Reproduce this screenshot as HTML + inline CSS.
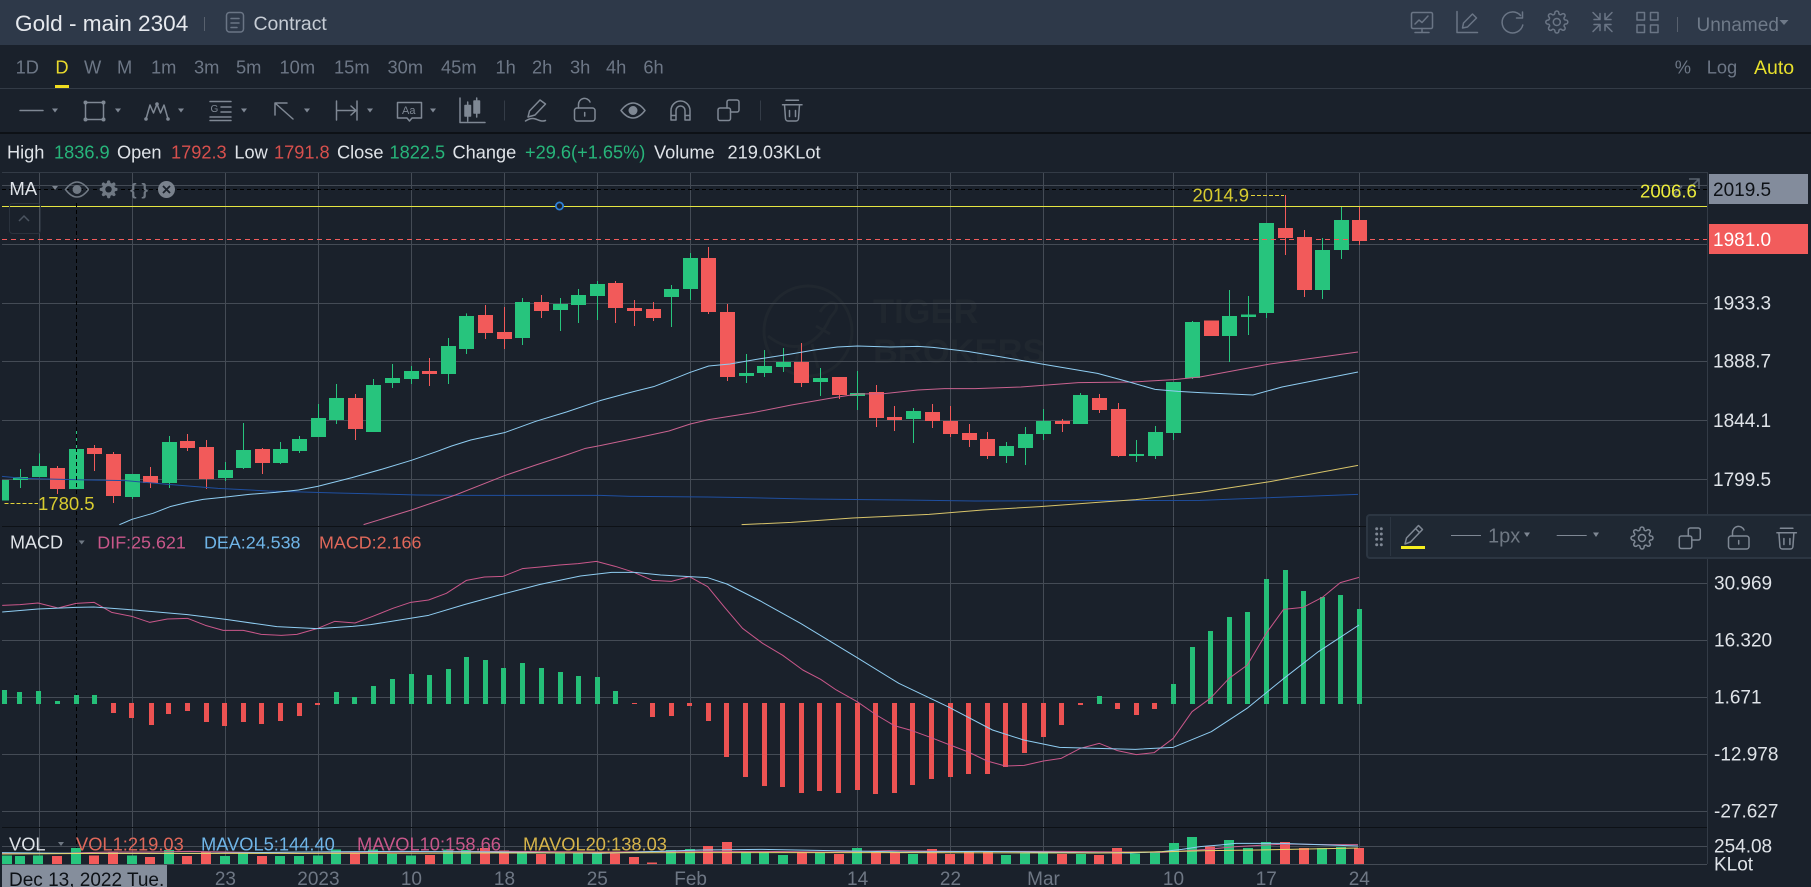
<!DOCTYPE html>
<html>
<head>
<meta charset="utf-8">
<title>Gold - main 2304</title>
<style>
html,body{margin:0;padding:0;background:#1a212b;width:1811px;height:887px;overflow:hidden}
svg{display:block;font-family:"Liberation Sans",sans-serif}
.i{fill:none;stroke:#7f8894;stroke-width:1.5;stroke-linecap:round;stroke-linejoin:round}
.h{fill:none;stroke:#6a7585;stroke-width:1.5;stroke-linecap:round;stroke-linejoin:round}
.l{fill:none;vector-effect:non-scaling-stroke;stroke-linejoin:round}
.tf{font-size:18.3px;fill:#6d7786}
.info{font-size:18.2px;fill:#dfe3e8}
.g{fill:#27b57a}.r{fill:#d8504d}
.ax{font-size:19px;fill:#dfe3e8}
.dt{font-size:19px;fill:#6e7784;text-anchor:middle}
.lb{font-size:18.2px}
</style>
</head>
<body>
<svg width="1811" height="887" viewBox="0 0 1811 887" xmlns="http://www.w3.org/2000/svg">
<defs>
<path id="gear" d="M19.4 15a1.65 1.65 0 0 0 .33 1.82l.06.06a2 2 0 0 1 0 2.83 2 2 0 0 1-2.83 0l-.06-.06a1.65 1.65 0 0 0-1.82-.33 1.65 1.65 0 0 0-1 1.51V21a2 2 0 0 1-2 2 2 2 0 0 1-2-2v-.09A1.65 1.65 0 0 0 9 19.4a1.65 1.65 0 0 0-1.82.33l-.06.06a2 2 0 0 1-2.83 0 2 2 0 0 1 0-2.83l.06-.06a1.65 1.65 0 0 0 .33-1.82 1.65 1.65 0 0 0-1.51-1H3a2 2 0 0 1-2-2 2 2 0 0 1 2-2h.09A1.65 1.65 0 0 0 4.6 9a1.65 1.65 0 0 0-.33-1.82l-.06-.06a2 2 0 0 1 0-2.83 2 2 0 0 1 2.83 0l.06.06a1.65 1.65 0 0 0 1.82.33H9a1.65 1.65 0 0 0 1-1.51V3a2 2 0 0 1 2-2 2 2 0 0 1 2 2v.09a1.65 1.65 0 0 0 1 1.51 1.65 1.65 0 0 0 1.82-.33l.06-.06a2 2 0 0 1 2.83 0 2 2 0 0 1 0 2.83l-.06.06a1.65 1.65 0 0 0-.33 1.82V9a1.65 1.65 0 0 0 1.51 1H21a2 2 0 0 1 2 2 2 2 0 0 1-2 2h-.09a1.65 1.65 0 0 0-1.51 1z"/>
<g id="lock"><rect x="574.5" y="108" width="20.5" height="13" rx="2.5"/><path d="M578.5 108v-3.500a6 6 0 0 1 11.500-2.500M584.700 112.500v3.500"/></g>
<g id="copy"><rect x="718" y="108" width="12.500" height="12.500" rx="2"/><path d="M727 108v-6a2 2 0 0 1 2-2h8a2 2 0 0 1 2 2v8a2 2 0 0 1-2 2h-6.500"/></g>
<g id="trash"><path d="M782.500 104.700h19.500M786 100.300h12.500M784.500 104.700l1 13.800a2.500 2.500 0 0 0 2.500 2.500h8a2.500 2.500 0 0 0 2.500-2.500l1-13.800M789.500 110.500v6M795.500 110.500v6"/></g>
</defs>

<!-- header -->
<rect x="0" y="0" width="1811" height="45" fill="#2e3949"/>
<text x="15" y="31" font-size="22.600" fill="#e6e9ee">Gold - main 2304</text>
<path d="M204.500 17V31" stroke="#58616e" stroke-width="1"/>
<g class="h"><rect x="226.500" y="12.500" width="17" height="19.500" rx="3"/><path d="M231 18.500h8M231 23h8M231 27.500h6"/></g>
<text x="253.500" y="30" font-size="19.400" fill="#c6ccd4">Contract</text>

<g class="h">
<rect x="1411.500" y="12.500" width="21" height="16" rx="1.500"/><path d="M1422 28.500v4M1415 32.500h14M1415 24l4-4 3 2.500 6-6.500"/>
<path d="M1457 11.500V32.500H1477.500M1462.500 28l1-5 9-9 4 4-9 9z"/>
<path d="M1520.500 15.500A10.500 10.500 0 1 0 1522.800 25M1522.500 12v6h-6"/>
<use href="#gear" transform="translate(1544.800 10)"/><circle cx="1556.800" cy="22" r="3.500"/>
<path d="M1593 12.500l7 7M1600 13.500v6h-6M1612 12.500l-7 7M1605 13.500v6h6M1593 31.500l7-7M1600 30.500v-6h-6M1612 31.500l-7-7M1605 30.500v-6h6"/>
<rect x="1637" y="12.500" width="7.500" height="7.500"/><rect x="1650.500" y="12.500" width="7.500" height="7.500"/><rect x="1637" y="25" width="7.500" height="7.500"/><rect x="1650.500" y="25" width="7.500" height="7.500"/>
</g>
<path d="M1677.500 17V32" stroke="#58616e" stroke-width="1"/>
<text x="1696.500" y="31" font-size="19" fill="#6f7a89">Unnamed</text>
<path d="M1779.500 20h9l-4.500 5z" fill="#6f7a89"/>

<!-- timeframe row -->
<g class="tf">
<text x="15.600" y="73.500">1D</text>
<text x="55.400" y="73.500" fill="#e8d92c" style="fill:#e8d92c">D</text>
<text x="84" y="73.500">W</text><text x="117" y="73.500">M</text>
<text x="151" y="73.500">1m</text><text x="194" y="73.500">3m</text><text x="236" y="73.500">5m</text>
<text x="279.500" y="73.500">10m</text><text x="334" y="73.500">15m</text><text x="387.500" y="73.500">30m</text><text x="441" y="73.500">45m</text>
<text x="495.500" y="73.500">1h</text><text x="532" y="73.500">2h</text><text x="570" y="73.500">3h</text><text x="606" y="73.500">4h</text><text x="643.400" y="73.500">6h</text>
<text x="1674.700" y="73.500">%</text><text x="1706.700" y="73.500">Log</text>
</g>
<text x="1754" y="74" font-size="19.500" fill="#e8e02c">Auto</text>
<rect x="55" y="85" width="14" height="3" fill="#f0dd20"/>
<rect x="0" y="88" width="1811" height="1" fill="#333b46"/>

<!-- toolbar -->
<g class="i">
<path d="M20 110.500H43"/>
<rect x="85.500" y="102.500" width="18" height="17"/>
<path d="M146 119l4-14 3.500 8 3.500-9 3.500 9 3.500-8 4 14"/>
<path d="M210 101.500h21M221 107h10M221 112h10M210 117h21M210 120.500h21"/>
<path d="M293 119L275 103M275 103h12M275 103v12"/>
<path d="M336.500 101v19M357 101v19M337 110.500h19M351 106l5 4.500-5 4.500"/>
<path d="M397.500 102.500h24v15.500h-9.500l-2.500 3-2.500-3h-9.500z"/>
<path d="M460 98v24.500h25M467.700 102v19M476.700 98v19"/>
<rect x="465" y="105.500" width="5.500" height="10.500" fill="#7f8894"/><rect x="474" y="101" width="5.500" height="12" fill="#7f8894"/>
<path d="M528 117l1.500-6L540 100l5.500 4L535 115l-7 2zM525.500 121c3-2 7-3 10-2s6 3 10 1.500"/>
<use href="#lock"/>
<path d="M621 110.500C626 104 630 103 633 103s7 1 12 7.500C640 117 636 118 633 118s-7-1-12-7.500z"/>
<path d="M671 120V110.500a9.500 9.500 0 0 1 19 0V120h-5V110.500a4.500 4.500 0 0 0-9 0V120zM671 115.500h5M685 115.500h5"/>
<use href="#copy"/>
<use href="#trash"/>
</g>
<circle cx="633" cy="110.500" r="4.500" fill="#7f8894"/>
<g fill="#7f8894">
<circle cx="85.500" cy="102.500" r="2"/><circle cx="103.500" cy="102.500" r="2"/><circle cx="85.500" cy="119.500" r="2"/><circle cx="103.500" cy="119.500" r="2"/>
<circle cx="146" cy="119" r="1.800"/><circle cx="157" cy="104" r="1.800"/><circle cx="168" cy="119" r="1.800"/>
<path d="M52 108.500h6l-3 4zM115 108.500h6l-3 4zM178 108.500h6l-3 4zM241 108.500h6l-3 4zM304 108.500h6l-3 4zM367 108.500h6l-3 4zM430 108.500h6l-3 4z"/>
</g>
<text x="210.500" y="112" font-size="10" fill="#7f8894">G</text>
<text x="402" y="114" font-size="11" fill="#7f8894">Aa</text>
<path d="M504.500 100.500v20M760.500 100.500v20" stroke="#343c47" stroke-width="1"/>
<rect x="0" y="132" width="1811" height="2" fill="#0d1116"/>

<!-- info -->
<g class="info">
<text x="7" y="158.500">High</text><text x="54" y="158.500" class="g">1836.9</text>
<text x="117" y="158.500">Open</text><text x="171" y="158.500" class="r">1792.3</text>
<text x="234.400" y="158.500">Low</text><text x="274" y="158.500" class="r">1791.8</text>
<text x="337" y="158.500">Close</text><text x="389.500" y="158.500" class="g">1822.5</text>
<text x="452.500" y="158.500">Change</text><text x="525" y="158.500" class="g">+29.6(+1.65%)</text>
<text x="654" y="158.500">Volume</text><text x="727.500" y="158.500">219.03KLot</text>
</g>

<!-- watermark -->
<g fill="none" stroke="#20272f" stroke-width="3">
<ellipse cx="808" cy="331" rx="44" ry="45"/>
<path d="M768 336c10 8 20 12 32 10 14-3 24-14 30-28M830 318c4-6 8-8 6-14-6-4-12 2-16 8M800 346l-6 22M812 344l6 24M816 326l14 8"/>
</g>
<text x="873" y="323" font-size="34.500" font-weight="bold" fill="#20272f">TIGER</text>
<text x="873" y="363" font-size="34.500" font-weight="bold" fill="#20272f">BROKERS</text>

<!-- grid -->
<path d="M39.500 172V864M132.500 172V864M225.500 172V864M318.500 172V864M411.500 172V864M504.500 172V864M597.500 172V864M690.500 172V864M857.500 172V864M950.500 172V864M1043.500 172V864M1173.500 172V864M1266.500 172V864M1359.500 172V864" stroke="#444b55" stroke-width="1" shape-rendering="crispEdges"/>
<path d="M2 185.500H1707M2 244.500H1707M2 303.500H1707M2 361.500H1707M2 420.500H1707M2 479.500H1707M2 583.500H1707M2 640.500H1707M2 697.500H1707M2 754.500H1707M2 811.500H1707M2 846.500H1707M2 864.500H1707" stroke="#444b55" stroke-width="1" shape-rendering="crispEdges"/>
<path d="M2 172.500H1707M1707.500 172V864" stroke="#333b46" stroke-width="1" shape-rendering="crispEdges"/>
<path d="M2 526.500H1707M2 827.500H1707" stroke="#0d1116" stroke-width="1" shape-rendering="crispEdges"/>

<!-- candles -->
<g transform="translate(0 230) scale(1 .33333)" fill="none" shape-rendering="crispEdges">
<path stroke="#27c47d" stroke-width="1" d="M20.500 717V774M39.500 670V741M76.500 600V777M132.500 732V807M169.500 618V774M225.500 696V753M243.500 579V717M280.500 636V702M299.500 618V669M318.500 522V621M336.500 462V582M373.500 447V606M392.500 402V474M411.500 408V462M448.500 324V462M466.500 250V372M522.500 204V345M560.500 204V303M578.500 177V279M597.500 153V270M671.500 165V291M690.500 69V210M746.500 372V459M764.500 360V441M783.500 354V426M820.500 414V498M857.500 423V540M913.500 534V639M1006.500 636V699M1025.500 591V705M1043.500 537V630M1080.500 489V582M1136.500 630V696M1155.500 588V687M1173.500 456V630M1192.500 273V447"/>
<path stroke="#27c47d" stroke-width="15" d="M20.500 741V750M39.500 708V741M76.500 657V777M132.500 732V801M169.500 636V759M225.500 720V744M243.500 660V714M280.500 657V699M299.500 627V663M318.500 564V621M336.500 504V570M373.500 465V606M392.500 444V459M411.500 423V447M448.500 348V432M466.500 258V357M522.500 216V324M560.500 222V240M578.500 195V225M597.500 162V198M671.500 177V201M690.500 84V177M746.500 429V438M764.500 408V429M783.500 396V411M820.500 444V456M857.500 489V498M913.500 543V567M1006.500 648V678M1025.500 612V654M1043.500 573V612M1080.500 495V582M1136.500 672V678M1155.500 606V678M1173.500 456V609M1192.500 276V444"/>
<path stroke="#27c47d" stroke-width="7" d="M5.500 750V812"/>
<path stroke="#f25a5a" stroke-width="1" d="M57.500 708V792M94.500 645V723M113.500 666V819M150.500 711V774M187.500 612V663M206.500 630V777M262.500 654V732M355.500 492V630M429.500 384V468M485.500 225V327M504.500 231V357M541.500 195V264M615.500 153V279M634.500 210V288M653.500 216V273M708.500 51V252M727.500 222V453M801.500 339V471M839.500 441V507M876.500 465V591M894.500 528V603M932.500 522V594M950.500 528V621M969.500 582V651M987.500 606V687M1062.500 567V606M1099.500 492V549M1118.500 519V681"/>
<path stroke="#f25a5a" stroke-width="15" d="M57.500 714V777M94.500 654V672M113.500 672V798M150.500 738V759M187.500 633V654M206.500 651V747M262.500 657V699M355.500 504V597M429.500 423V432M485.500 255V309M504.500 306V327M541.500 216V243M615.500 159V234M634.500 234V243M653.500 237V264M708.500 84V246M727.500 246V441M801.500 396V459M839.500 441V495M876.500 486V564M894.500 561V570M932.500 546V573M950.500 573V612M969.500 609V630M987.500 627V678M1062.500 573V582M1099.500 504V540M1118.500 537V678"/>
</g>
<g transform="translate(0 170) scale(1 .33333)" fill="none" shape-rendering="crispEdges">
<path stroke="#27c47d" stroke-width="1" d="M1229.500 360V576M1248.500 378V495M1266.500 159V444M1322.500 204V387M1341.500 110V267"/>
<path stroke="#27c47d" stroke-width="15" d="M1229.500 438V498M1248.500 434V441M1266.500 159V429M1322.500 240V360M1341.500 150V240"/>
<path stroke="#f25a5a" stroke-width="1" d="M1285.500 75V255M1304.500 180V381M1359.500 110V225"/>
<path stroke="#f25a5a" stroke-width="15" d="M1211.500 452V498M1285.500 174V204M1304.500 201V360M1359.500 150V213"/>
</g>

<!-- MA lines -->
<g transform="translate(0 230) scale(1 .33333)">
<polyline class="l" stroke="#1f4fa0" stroke-width="1" points="2,739 23,745 88,750 126,752 168,763 218,775 268,783 337,789 379,792 417,795 459,796 600,796 630.600,799 707,801 745.400,803 806.700,807 902.300,810 975,813 1063,812 1200,811 1358,793"/>
<polyline class="l" stroke="#d8c46a" stroke-width="1" points="741.600,884 791.300,877 852.600,864 894.700,858 929,853 982.700,840 1040,830 1097.500,817 1135.800,809 1200,787 1270,755 1358,706"/>
<polyline class="l" stroke="#c9628f" stroke-width="1" points="363.600,884 411.400,840 455.400,795 504.400,737 535.800,705 566.400,675 585.500,655 600,647 638.300,623 668.900,603 690.300,582 708.700,569 753,548 791.400,525 829.600,505 857.600,492 884.400,491 917.600,480 944.400,476 975,476 1021,471 1078.400,458 1132,456 1174,449 1200,441 1270,402 1358,366"/>
<polyline class="l" stroke="#8fcdf2" stroke-width="1" points="119.400,884 132,868 153,850 170,830 187.500,817 203,808 226,801 249,793 275.500,787 298.500,780 317.600,769 352,743 382.700,717 411.400,691 436.300,665 451.600,648 470.700,630 504.400,608 535.800,574 566.400,546 600,512 626.800,490 653.600,470 672.700,448 690.300,427 708.700,408 730,402 760.700,386 791,372 814.300,360 837.300,351 857.600,348 890.900,351 917.600,349 933,352 967.400,364 998,379 1043.900,403 1097.500,430 1128,455 1155,478 1178,484 1200,488 1253,495 1282,471 1358,426"/>
</g>

<!-- overlay lines -->
<path d="M2 206.500H1707" stroke="#e6e642" stroke-width="1.200" shape-rendering="crispEdges"/>
<circle cx="559.500" cy="206" r="3.600" fill="#1a212b" stroke="#2f7fd6" stroke-width="1.800"/>
<path d="M2 189.500H1707" stroke="#000" stroke-width="1" stroke-dasharray="4 3" shape-rendering="crispEdges"/>
<path d="M2 239.500H1707" stroke="#f25c5c" stroke-width="1" stroke-dasharray="5 4" shape-rendering="crispEdges"/>
<path d="M76.500 203V864" stroke="#000" stroke-width="1" stroke-dasharray="4 3" shape-rendering="crispEdges"/>
<path d="M1251 195.500H1284" stroke="#e3d23a" stroke-width="1" stroke-dasharray="4 2" shape-rendering="crispEdges"/>
<path d="M4.500 503.500H38" stroke="#e3d23a" stroke-width="1" stroke-dasharray="4 2" shape-rendering="crispEdges"/>
<text x="1192.500" y="201.500" font-size="18.500" fill="#d8cc30">2014.9</text>
<text x="38" y="510" font-size="18.500" fill="#d8cc30">1780.5</text>
<path d="M1689 179h10v10M1699 179l-9 9M1682 186l-9 9M1673 187v8h8" fill="none" stroke="#5b6470" stroke-width="1.600"/>
<text x="1640" y="197.500" font-size="18.600" fill="#ecec3c">2006.6</text>

<!-- MA controls -->
<text x="9.400" y="195" font-size="18.500" fill="#dfe3e8">MA</text>
<path d="M52 186h6l-3 4z" fill="#7a828d"/>
<path d="M65.500 189.500C70 183.500 74 182 77 182s7 1.500 11.500 7.500C84 195.500 80 197 77 197s-7-1.500-11.500-7.500z" fill="none" stroke="#6f7883" stroke-width="1.500"/>
<circle cx="77" cy="189.500" r="4.500" fill="#6f7883"/>
<use href="#gear" transform="translate(98.800 179.500) scale(.82)" fill="#6f7883"/><circle cx="108.500" cy="189.300" r="3.200" fill="#1a212b"/>
<text x="130" y="195" font-size="17" fill="#6f7883" font-weight="bold">{ }</text>
<circle cx="166.500" cy="189.500" r="8.500" fill="#7a828d"/>
<path d="M163 186l7 7M170 186l-7 7" stroke="#1a212b" stroke-width="1.800"/>
<rect x="9.500" y="203.500" width="31" height="30" rx="3" fill="none" stroke="#2a323d"/>
<path d="M19 221l5-5 5 5" fill="none" stroke="#4b5460" stroke-width="1.500"/>

<!-- MACD -->
<text x="10" y="548.500" font-size="18" fill="#dfe3e8">MACD</text>
<path d="M78.700 540.500h6l-3 4z" fill="#6f7883"/>
<text x="97.300" y="548.500" font-size="17.900" fill="#c9578a">DIF:25.621</text>
<text x="204" y="548.500" font-size="17.900" fill="#6fb5e8">DEA:24.538</text>
<text x="319" y="548.500" font-size="17.900" fill="#e0685a">MACD:2.166</text>
<g transform="translate(0 520) scale(1 .33333)" fill="none" shape-rendering="crispEdges">
<path stroke="#25bf78" stroke-width="5" d="M4.500 510V552M19.500 516V552M38.500 513V552M57.500 543V552M76.500 525V552M94.500 525V552M336.500 516V552M354.500 531V552M373.500 498V552M392.500 477V552M411.500 462V552M429.500 465V552M448.500 447V552M466.500 411V552M485.500 420V552M503.500 444V552M522.500 429V552M541.500 444V552M560.500 456V552M578.500 468V552M597.500 471V552M615.500 513V552M1099.500 528V552M1173.500 492V552M1192.500 381V552M1210.500 333V552M1229.500 291V552M1247.500 276V552M1266.500 177V552M1285.500 150V552M1303.500 213V552M1322.500 231V552M1340.500 225V552M1359.500 267V552"/>
<path stroke="#ec5252" stroke-width="5" d="M113.500 549V579M131.500 549V594M151.500 549V615M168.500 549V582M187.500 549V573M206.500 549V606M224.500 549V618M243.500 549V606M261.500 549V612M280.500 549V603M299.500 549V588M317.500 549V555M634.500 549V552M652.500 549V591M671.500 549V588M689.500 549V558M708.500 549V603M726.500 549V711M745.500 549V771M764.500 549V798M782.500 549V801M801.500 549V819M819.500 549V813M838.500 549V819M857.500 549V810M875.500 549V822M894.500 549V819M912.500 549V795M931.500 549V777M950.500 549V771M968.500 549V762M987.500 549V762M1005.500 549V741M1024.500 549V699M1043.500 549V651M1061.500 549V615M1080.500 549V555M1117.500 549V567M1136.500 549V585M1154.500 549V567"/>
</g>
<g transform="translate(0 520) scale(1 .33333)">
<polyline class="l" stroke="#c9578a" stroke-width="1" points="2.200,256 20,254 38,249 58,264 76,250 94,247 111.600,277 131.700,289 149.600,307 167.400,297 187.500,295 205.400,316 223.200,331 243.300,331 261.200,343 281.300,346 296.900,343 317,326 334.800,304 355,309 372.800,289 392.900,265 410.700,247 428.600,240 446.400,220 466.500,181 484.400,171 503.100,169 522.300,146 540.200,141 559.400,135 578.100,131 596.400,124 615.200,139 634,157 652.200,181 671.400,184 689.400,170 707.700,200 724.600,262 742.500,325 762.600,370 782.700,406 802.800,450 820.600,478 836.300,510 857.200,545 876.400,585 894.300,617 912.100,632 931.300,653 950,675 968.400,696 987.100,723 1005.400,738 1024.200,736 1043.400,723 1061.300,715 1080.400,685 1099.200,670 1117.500,692 1136.300,704 1154.100,698 1173.300,655 1192,575 1210.400,535 1229.100,475 1247.400,435 1266.200,340 1283.600,268 1303.200,262 1322.400,232 1340.300,188 1359,172"/>
<polyline class="l" stroke="#8fcdf2" stroke-width="1" points="2.200,276 38,267 76,262 93.800,261 134,270 187.500,284 227.700,299 276.800,320 317,326 352.700,319 370.500,314 428.600,286 464.300,254 504.500,221 540.200,193 580.400,168 611.600,157 634,157 660.700,165 689.400,170 707.700,173 726.900,192 760.400,243 800.500,310 857.200,413 898.800,490 947.900,560 992.500,630 1023.700,660 1059.500,682 1135.400,688 1173.300,682 1211.300,635 1247,565 1282.700,478 1318.400,395 1359,315"/>
</g>

<!-- VOL -->
<g transform="translate(0 820) scale(1 .33333)" fill="none" shape-rendering="crispEdges">
<path stroke="#27c47d" stroke-width="10" d="M7 106V132M20 108V132M38 106V132M76 84V132M132 106V132M169 90V132M225 108V132M243 96V132M280 108V132M299 108V132M318 106V132M336 88V132M373 88V132M392 102V132M411 106V132M448 88V132M466 90V132M522 100V132M560 100V132M578 100V132M597 100V132M671 90V132M690 87V132M746 96V132M764 96V132M783 105V132M820 96V132M857 84V132M913 102V132M1006 105V132M1025 99V132M1043 96V132M1081 102V132M1135 100V132M1155 96V132M1174 69V132M1192 51V132M1229 60V132M1248 84V132M1266 66V132M1322 84V132M1341 81V132"/>
<path stroke="#f25a5a" stroke-width="10" d="M57 108V132M94 106V132M113 96V132M150 111V132M187 108V132M206 94V132M262 108V132M355 94V132M430 105V132M485 84V132M504 92V132M541 102V132M615 100V132M634 111V132M652 128V132M708 78V132M727 66V132M802 96V132M839 102V132M876 96V132M895 96V132M932 87V132M950 102V132M969 96V132M988 96V132M1062 102V132M1099 105V132M1117 84V132M1210 80V132M1285 66V132M1304 84V132M1359 84V132"/>
</g>
<g transform="translate(0 820) scale(1 .33333)">
<polyline class="l" stroke="#c9628f" stroke-width="1" points="2,100 60,100 110,96 150,96 190,94 300,100 400,96 500,94 600,96 690,94 760,94 830,96 890,92 960,94 1060,94 1130,96 1162,97 1207,88 1236,80 1286,72 1327,74 1358,74"/>
<polyline class="l" stroke="#8fcdf2" stroke-width="1" points="2,98 80,100 200,100 300,96 400,94 500,96 600,100 700,90 760,88 830,92 900,96 980,94 1060,97 1130,99 1162,95 1182,88 1200,80 1220,75 1236,70 1281,70 1358,78"/>
<polyline class="l" stroke="#e6d66a" stroke-width="1" points="2,102 100,100 300,100 500,99 700,98 900,98 1100,99 1168,95 1209,92 1259,90 1358,84"/>
</g>
<text x="9" y="850.500" font-size="18.300" fill="#dfe3e8">VOL</text>
<path d="M58 842h6l-3 4z" fill="#6f7883"/>
<text x="76" y="850.500" font-size="18.300" fill="#e0685a">VOL1:219.03</text>
<text x="201" y="850.500" font-size="18.300" fill="#6fb5e8">MAVOL5:144.40</text>
<text x="357" y="850.500" font-size="18.300" fill="#c9578a">MAVOL10:158.66</text>
<text x="523" y="850.500" font-size="18.300" fill="#d6b44a">MAVOL20:138.03</text>

<!-- date axis -->
<g class="dt">
<text x="225.400" y="885">23</text><text x="318.400" y="885">2023</text><text x="411.400" y="885">10</text>
<text x="504.500" y="885">18</text><text x="597.300" y="885">25</text><text x="690.600" y="885">Feb</text>
<text x="857.600" y="885">14</text><text x="950.500" y="885">22</text><text x="1043.500" y="885">Mar</text>
<text x="1173.500" y="885">10</text><text x="1266.300" y="885">17</text><text x="1359.300" y="885">24</text>
</g>
<rect x="2" y="865" width="165" height="22" fill="#858e9c"/>
<text x="9" y="886" font-size="19" fill="#0d1116">Dec 13, 2022 Tue.</text>

<!-- right axis -->
<rect x="1709" y="174" width="99" height="30" fill="#838c9c"/>
<text x="1713" y="196" class="ax" style="fill:#0d1116">2019.5</text>
<rect x="1709" y="224" width="99" height="30" fill="#f25c5c"/>
<text x="1713" y="246" class="ax" style="fill:#fff">1981.0</text>
<g class="ax">
<text x="1713" y="309.500">1933.3</text><text x="1713" y="367.500">1888.7</text><text x="1713" y="427">1844.1</text><text x="1713" y="486">1799.5</text>
<text x="1714" y="589.500">30.969</text><text x="1714" y="646.500">16.320</text><text x="1714" y="703.500">1.671</text><text x="1714" y="760.500">-12.978</text><text x="1714" y="817.500">-27.627</text>
<text x="1714" y="852.500">254.08</text><text x="1714" y="870.500">KLot</text>
</g>

<!-- floating toolbar -->
<rect x="1367" y="515" width="460" height="43" rx="3" fill="#1f2833" stroke="#2c3642" stroke-width="2"/>
<path d="M1390.500 517V556" stroke="#2c3642" stroke-width="1"/>
<g fill="#7f8894">
<circle cx="1376.700" cy="528.700" r="1.500"/><circle cx="1381.300" cy="528.700" r="1.500"/><circle cx="1376.700" cy="534" r="1.500"/><circle cx="1381.300" cy="534" r="1.500"/><circle cx="1376.700" cy="539.300" r="1.500"/><circle cx="1381.300" cy="539.300" r="1.500"/><circle cx="1376.700" cy="544.700" r="1.500"/><circle cx="1381.300" cy="544.700" r="1.500"/>
</g>
<path class="i" d="M1405 544l1.500-6 12-12.500 4 4-12 12.500zM1415.500 528.500l4 4"/>
<rect x="1401" y="546" width="24" height="3" fill="#f5ee1e"/>
<path d="M1451 535.500h30M1556.700 535.500h30" stroke="#7f8894" stroke-width="1"/>
<text x="1488" y="542.500" font-size="20" fill="#6f7883">1px</text>
<path d="M1524 532.500h6l-3 4.500zM1593 532.500h6l-3 4.500z" fill="#7f8894"/>
<g class="i">
<use href="#gear" transform="translate(1630 526)"/><circle cx="1642" cy="538" r="3.500"/>
<use href="#copy" transform="translate(961.300 428) scale(1)"/>
<use href="#lock" transform="translate(1154 428)"/>
<use href="#trash" transform="translate(994.400 428)"/>
</g>
</svg>
</body>
</html>
